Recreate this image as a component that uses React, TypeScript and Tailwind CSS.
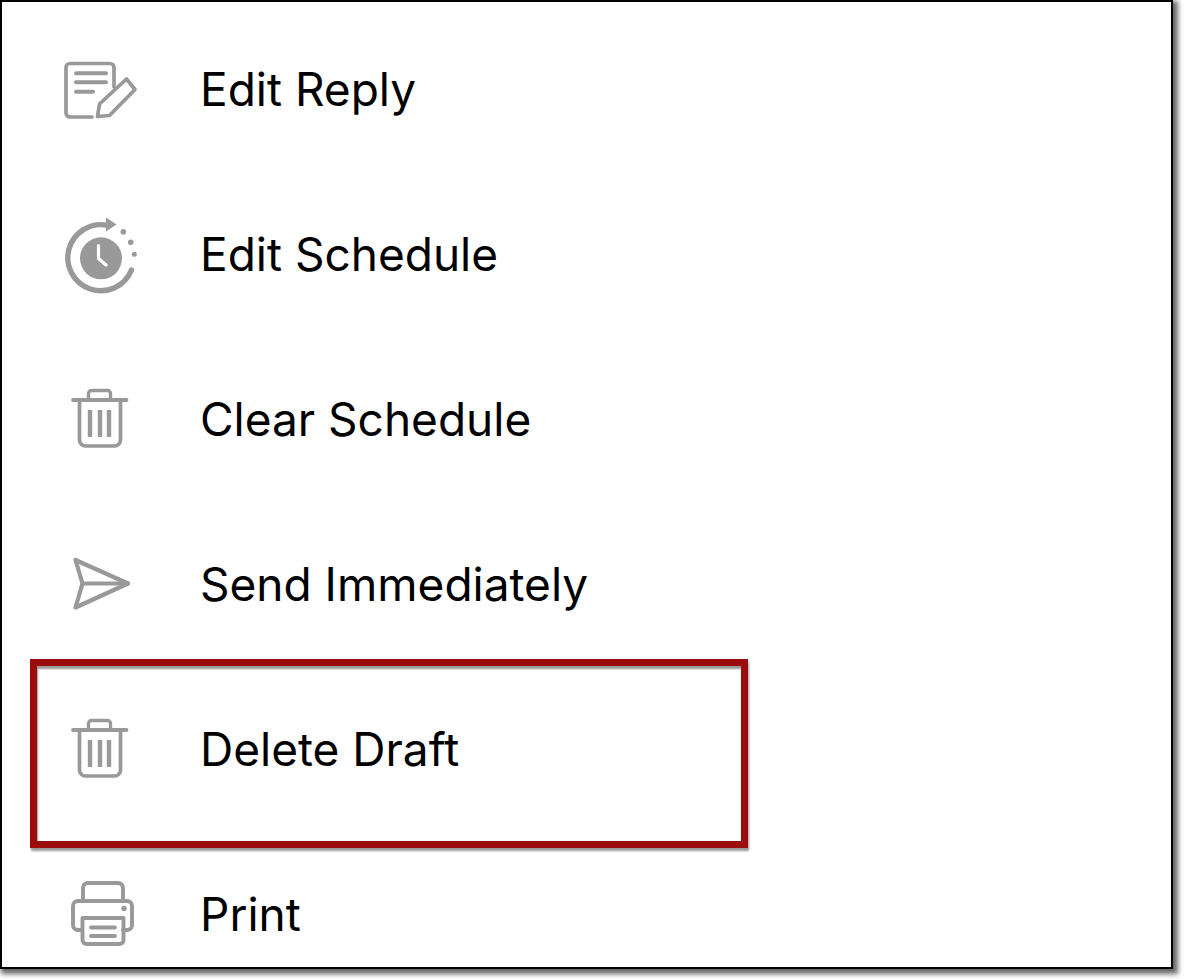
import React from 'react';

const gray = '#999999';

const EditReplyIcon = () => (
  <svg className="w-[100px] h-[81px] shrink-0" viewBox="0 -1 100 81" fill="none" stroke={gray} strokeLinecap="round" strokeLinejoin="round">
    <path d="M42 67H20a4 4 0 0 1-4-4V17.5a4 4 0 0 1 4-4H60a4 4 0 0 1 4 4V37" strokeWidth="3.7" />
    <path d="M26 23.3H56M26 32.3H56M26 41.7H43" strokeWidth="4" />
    <path d="M47.5 66.5L49.5 54L76.5 29L85 39.5L59.5 65.5Z" strokeWidth="3.7" />
  </svg>
);

const ScheduleIcon = () => (
  <svg className="w-[100px] h-[81px] shrink-0" viewBox="0 -1 100 81" fill="none">
    <path d="M58 10.5A33 33 0 1 0 81.5 55" stroke={gray} strokeWidth="5.4" strokeLinecap="round" />
    <path d="M56 2.5L66.5 9.5L56 16.5Z" fill={gray} />
    <circle cx="51" cy="43.3" r="21" fill={gray} />
    <path d="M48.5 30.5V43.5L56 50" stroke="#fff" strokeWidth="3.2" strokeLinecap="round" strokeLinejoin="round" />
    <circle cx="73.3" cy="16.7" r="2.8" fill={gray} />
    <circle cx="80.7" cy="27.3" r="2.8" fill={gray} />
    <circle cx="84.3" cy="39.3" r="2.5" fill={gray} />
  </svg>
);

const TrashIcon = () => (
  <svg className="w-[100px] h-[81px] shrink-0" viewBox="0 -1 100 81" fill="none" stroke={gray} strokeLinecap="round" strokeLinejoin="round">
    <path d="M38.5 18V13.5a3 3 0 0 1 3-3H57.5a3 3 0 0 1 3 3V18" strokeWidth="3.4" />
    <path d="M23 20H76.5" strokeWidth="3.8" />
    <path d="M29.5 20V60a6 6 0 0 0 6 6H64.5a6 6 0 0 0 6-6V20" strokeWidth="3.7" />
    <path d="M40 30V57M50 30V57M59 30V57" strokeWidth="4.4" strokeLinecap="butt" />
  </svg>
);

const SendIcon = () => (
  <svg className="w-[100px] h-[81px] shrink-0" viewBox="0 -1 100 81" fill="none" stroke={gray} strokeWidth="4.2" strokeLinecap="round" strokeLinejoin="round">
    <path d="M78 38.5L25.5 15L32.5 38.5L25.5 62.5Z" />
    <path d="M32.5 38.5H78" />
  </svg>
);

const PrintIcon = () => (
  <svg className="w-[100px] h-[81px] shrink-0" viewBox="0 4 100 81" fill="none" stroke={gray} strokeLinecap="round" strokeLinejoin="round">
    <path d="M33 29V18a5 5 0 0 1 5-5H68a5 5 0 0 1 5 5V29" strokeWidth="3.9" />
    <path d="M32 60H28a5 5 0 0 1-5-5V36a5 5 0 0 1 5-5H77a5 5 0 0 1 5 5V55a5 5 0 0 1-5 5H73" strokeWidth="3.9" />
    <path d="M32.5 48H73.5V70a4 4 0 0 1-4 4H36.5a4 4 0 0 1-4-4Z" strokeWidth="3.9" />
    <path d="M41 57.5H65M41 66H65" strokeWidth="3.9" />
    <circle cx="74" cy="38.5" r="2.7" fill={gray} stroke="none" />
  </svg>
);

const items = [
  { label: 'Edit Reply', icon: <EditReplyIcon /> },
  { label: 'Edit Schedule', icon: <ScheduleIcon /> },
  { label: 'Clear Schedule', icon: <TrashIcon /> },
  { label: 'Send Immediately', icon: <SendIcon /> },
  { label: 'Delete Draft', icon: <TrashIcon />, highlighted: true },
  { label: 'Print', icon: <PrintIcon /> },
];

const App = () => {
  return (
    <div className="w-[1184px] h-[979px] bg-white overflow-hidden font-['Inter',sans-serif]">
      <div className="w-[1173px] h-[969px] border-x-2 border-t-2 border-b-2 border-black bg-white shadow-[3px_3px_5px_2px_rgba(0,0,0,0.6)]">
        <div className="h-full overflow-hidden pt-[5px]">
          {items.map((item) => (
            <div key={item.label} className="relative flex items-center h-[165px] shrink-0 pl-[48px]">
              {item.icon}
              <span className="ml-[50px] -mt-[2px] text-[46px] leading-none text-black">{item.label}</span>
              {item.highlighted && (
                <div className="absolute left-[28px] top-[-8px] w-[718px] h-[189px] border-[7px] border-[#9b0d0d] shadow-[1px_3px_2px_rgba(0,0,0,0.4),inset_1px_3px_2px_rgba(0,0,0,0.4)]" />
              )}
            </div>
          ))}
        </div>
      </div>
    </div>
  );
};

export default App;
